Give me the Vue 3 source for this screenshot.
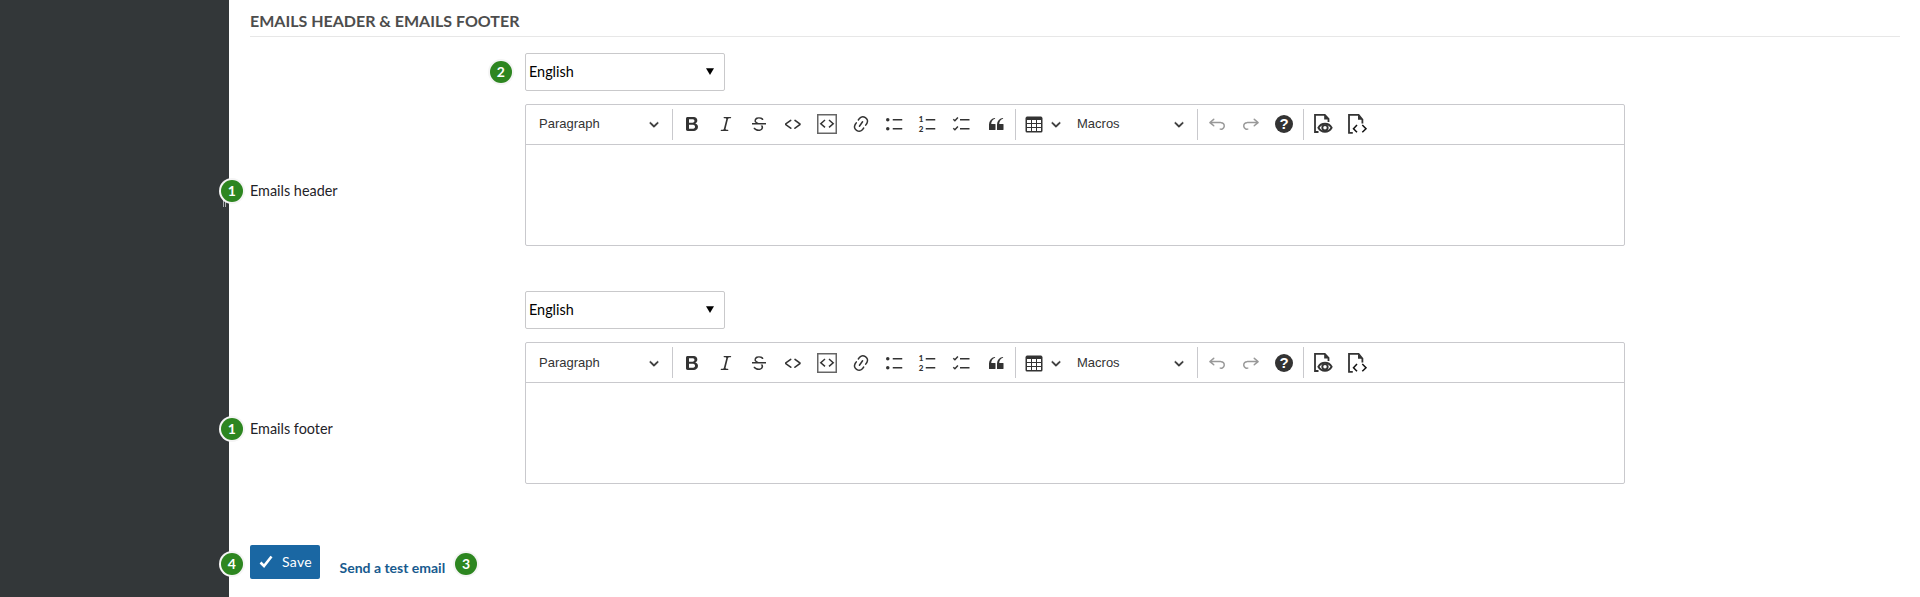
<script setup>
const rows = [
  { key: 'header', label: 'Emails header', language: 'English', badge: true },
  { key: 'footer', label: 'Emails footer', language: 'English', badge: false },
]

const quote =
  'M3 10.423a6.5 6.5 0 0 1 6.056-6.408l.038.67C6.448 5.423 5.354 7.663 5.22 10H9c.552 0 .5.432.5.986v4.511c0 .554-.448.503-1 .503h-5c-.552 0-.5-.449-.5-1.003v-4.574zm8 0a6.5 6.5 0 0 1 6.056-6.408l.038.67c-2.646.739-3.74 2.979-3.873 5.315H17c.552 0 .5.432.5.986v4.511c0 .554-.448.503-1 .503h-5c-.552 0-.5-.449-.5-1.003v-4.574z'
const bold =
  'M10.187 17H5.773c-.637 0-1.092-.138-1.364-.415-.273-.277-.409-.718-.409-1.323V4.738c0-.617.14-1.062.419-1.332.279-.27.73-.406 1.354-.406h4.68c.69 0 1.288.041 1.793.124.506.083.96.242 1.36.478.341.197.644.447.906.75a3.262 3.262 0 0 1 .808 2.162c0 1.401-.722 2.426-2.167 3.075C15.05 10.175 16 11.315 16 13.01a3.756 3.756 0 0 1-2.296 3.504 6.1 6.1 0 0 1-1.517.377c-.571.073-1.238.11-2 .11zm-.217-6.217H7v4.087h3.069c1.977 0 2.965-.69 2.965-2.072 0-.707-.256-1.22-.768-1.537-.512-.319-1.277-.478-2.296-.478zM7 5.13v3.619h2.606c.729 0 1.292-.067 1.69-.2a1.6 1.6 0 0 0 .91-.765c.165-.267.247-.566.247-.897 0-.707-.26-1.176-.778-1.409-.519-.232-1.31-.348-2.375-.348H7z'
const italic =
  'm9.586 14.633.021.004c-.036.335.095.655.393.962.082.083.173.15.274.201h1.474a.6.6 0 1 1 0 1.2H5.304a.6.6 0 0 1 0-1.2h1.15c.474-.07.809-.182 1.005-.334.157-.122.291-.32.404-.597l2.416-9.55a1.053 1.053 0 0 0-.281-.823 1.12 1.12 0 0 0-.442-.296H8.15a.6.6 0 0 1 0-1.2h6.443a.6.6 0 1 1 0 1.2h-1.195c-.376.056-.65.155-.823.296-.215.175-.423.439-.623.79l-2.366 9.347z'
const strike =
  'M7 16.4c-.8-.4-1.5-.9-2.2-1.5a.6.6 0 0 1-.2-.5l.3-.6h1c1 1.2 2.1 1.7 3.7 1.7 1 0 1.8-.3 2.3-.6.6-.4.6-1.2.6-1.3.2-1.2-.9-2.1-.9-2.1h2.1c.3.7.4 1.2.4 1.7v.8l-.6 1.2c-.6.8-1.1 1-1.6 1.2a6 6 0 0 1-2.4.6c-1 0-1.8-.3-2.5-.6zM6.8 9 6 8.3c-.4-.5-.5-.8-.5-1.6 0-.7.1-1.3.5-1.8.4-.6 1-1 1.6-1.3a6.3 6.3 0 0 1 4.7 0 4 4 0 0 1 1.7 1l.3.7c0 .1.2.4-.2.7-.4.2-.9.1-1 0a3 3 0 0 0-1.2-1c-.4-.2-1-.3-2-.4-.7 0-1.4.2-2 .6-.8.6-1 .8-1 1.5 0 .8.5 1 1.2 1.5.6.4 1.1.7 1.9 1H6.8zM3 10.5V9h14v1.5z'
const code =
  'm12.5 5.7 5.2 3.9v1.3l-5.6 4c-.1.2-.3.2-.5.2-.3-.1-.6-.7-.6-1l.3-.4 4.7-3.5L11.5 7l-.2-.2c-.1-.3-.1-.6 0-.8.2-.2.5-.4.8-.4a.8.8 0 0 1 .4.1zm-5.2 0L2 9.6v1.3l5.6 4c.1.2.3.2.5.2.3-.1.7-.7.6-1 0-.1 0-.3-.2-.4l-5-3.5L8.2 7l.2-.2c.1-.3.1-.6 0-.8-.2-.2-.5-.4-.8-.4a.8.8 0 0 0-.3.1z'
const link =
  'm11.077 15 .991-1.416a.75.75 0 1 1 1.229.86l-1.148 1.64a.748.748 0 0 1-.217.206 5.251 5.251 0 0 1-8.503-5.955.741.741 0 0 1 .12-.274l1.147-1.639a.75.75 0 1 1 1.228.86L4.933 10.7l.006.003a3.75 3.75 0 0 0 6.132 4.294l.006.004zm5.494-5.335a.748.748 0 0 1-.12.274l-1.147 1.639a.75.75 0 1 1-1.228-.86l.86-1.23a3.75 3.75 0 0 0-6.144-4.301l-.86 1.229a.75.75 0 0 1-1.229-.86l1.148-1.64a.748.748 0 0 1 .217-.206 5.251 5.251 0 0 1 8.503 5.955zm-4.563-2.532a.75.75 0 0 1 .184 1.045l-3.155 4.505a.75.75 0 1 1-1.229-.86l3.155-4.506a.75.75 0 0 1 1.045-.184z'
const table =
  'M3 6v3h4V6H3zm0 4v3h4v-3H3zm0 4v3h4v-3H3zm5 3h4v-3H8v3zm5 0h4v-3h-4v3zm4-4v-3h-4v3h4zm0-4V6h-4v3h4zm1.5 8a1.5 1.5 0 0 1-1.5 1.5H3A1.5 1.5 0 0 1 1.5 17V4c.222-.863 1.068-1.5 2-1.5h13c.932 0 1.778.637 2 1.5v13zM12 13v-3H8v3h4zm0-4V6H8v3h4z'
const undo =
  'm5.042 9.367 2.189 1.837a.75.75 0 0 1-.965 1.149l-3.788-3.18a.747.747 0 0 1-.21-.284.75.75 0 0 1 .17-.945L6.23 4.762a.75.75 0 1 1 .964 1.15L4.863 7.866h8.917A.75.75 0 0 1 14 7.9a4 4 0 1 1-1.477 7.718l.344-1.489a2.5 2.5 0 1 0 1.094-4.73l.008-.032H5.042z'
const chevron =
  'M.941 4.523a.75.75 0 1 1 1.06-1.06l3.006 3.005 3.005-3.005a.75.75 0 1 1 1.06 1.06l-3.549 3.55a.75.75 0 0 1-1.168-.136L.941 4.523z'
</script>

<template>
  <div class="page">
    <aside class="sidebar"><span class="handle"></span></aside>
    <main class="content">
      <h3 class="title">EMAILS HEADER &amp; EMAILS FOOTER</h3>

      <section v-for="row in rows" :key="row.key" class="field">
        <div class="label">
          <span class="badge edge">1</span>
          {{ row.label }}
        </div>
        <div class="control">
          <span v-if="row.badge" class="badge lang">2</span>
          <div class="select">
            <span>{{ row.language }}</span>
            <svg class="caret" viewBox="0 0 8 7"><path d="M0 .3h8L4 7z" /></svg>
          </div>
          <div class="editor">
            <div class="toolbar">
              <div class="dropdown heading">
                <span>Paragraph</span>
                <svg class="chev" viewBox="0 0 10 10"><path :d="chevron" /></svg>
              </div>
              <i class="sep"></i>
              <div class="group marks">
                <span class="btn"><svg viewBox="0 0 20 20"><path :d="bold" /></svg></span>
                <span class="btn"><svg viewBox="0 0 20 20"><path :d="italic" /></svg></span>
                <span class="btn"><svg viewBox="0 0 20 20"><path :d="strike" /></svg></span>
                <span class="btn"><svg viewBox="0 0 20 20"><path :d="code" /></svg></span>
                <span class="btn">
                  <svg viewBox="0 0 20 20">
                    <rect class="frame" x=".75" y=".75" width="18.5" height="18.5" />
                    <path class="line" d="M8 6 3.8 9.7 8 13.4M12 6l4.2 3.7L12 13.4" />
                  </svg>
                </span>
                <span class="btn"><svg viewBox="0 0 20 20"><path :d="link" /></svg></span>
                <span class="btn">
                  <svg viewBox="0 0 20 20">
                    <circle cx="2.75" cy="5.75" r="1.75" /><circle cx="2.75" cy="14.75" r="1.75" />
                    <path class="line" d="M7.75 5.75h9.5M7.75 14.75h9.5" />
                  </svg>
                </span>
                <span class="btn">
                  <svg viewBox="0 0 20 20">
                    <text x=".8" y="8.2" class="num">1</text>
                    <text x=".8" y="18" class="num">2</text>
                    <path class="line" d="M7.75 5.75h9.5M7.75 14.75h9.5" />
                  </svg>
                </span>
                <span class="btn">
                  <svg viewBox="0 0 20 20">
                    <path class="line" d="M8 5.75h9.5M8 14.75h9.5M1.3 5.2l1.6 1.5 3-3.2M1.3 14.2l1.6 1.5 3-3.2" />
                  </svg>
                </span>
                <span class="btn"><svg viewBox="0 0 20 20"><path :d="quote" /></svg></span>
              </div>
              <i class="sep"></i>
              <div class="tablebtn">
                <svg viewBox="0 0 20 20"><path :d="table" /></svg>
                <svg class="chev" viewBox="0 0 10 10"><path :d="chevron" /></svg>
              </div>
              <div class="dropdown macros">
                <span>Macros</span>
                <svg class="chev" viewBox="0 0 10 10"><path :d="chevron" /></svg>
              </div>
              <i class="sep"></i>
              <div class="group history">
                <span class="btn muted"><svg viewBox="0 0 20 20"><path :d="undo" /></svg></span>
                <span class="btn muted"><svg class="flip" viewBox="0 0 20 20"><path :d="undo" /></svg></span>
                <span class="btn">
                  <svg viewBox="0 0 20 20">
                    <circle cx="10" cy="10" r="9" />
                    <text x="10" y="15.4" class="question">?</text>
                  </svg>
                </span>
              </div>
              <i class="sep"></i>
              <div class="group modes">
                <span class="btn">
                  <svg viewBox="0 0 20 20">
                    <path class="line page-edge" d="M5.500 18H2V.8h9.800l3.700 4V8" />
                    <path d="M11.200.8v4.800h4.600z" />
                    <path class="eye" d="M5.400 13.800c1.500-2.700 3.700-4 6.600-4s5.100 1.300 6.600 4c-1.500 2.700-3.700 4-6.600 4s-5.100-1.300-6.600-4z" />
                    <circle class="eye" cx="12" cy="13.800" r="2.700" />
                  </svg>
                </span>
                <span class="btn">
                  <svg viewBox="0 0 20 20">
                    <path class="line page-edge" d="M5.800 18.900H2V.8h9.600l3.800 4.700v4" />
                    <path d="M11 .8v5h4.600z" />
                    <path class="line black" d="m10 11-3.500 3.700 3.500 3.600M15.300 11l3.700 3.700-3.700 3.600" />
                  </svg>
                </span>
              </div>
            </div>
            <div class="body"></div>
          </div>
        </div>
      </section>

      <div class="actions">
        <span class="badge edge save-badge">4</span>
        <button class="save">
          <svg viewBox="0 0 14 13"><path d="M1.500 7.500 5 11 12.500 1.500" /></svg>
          <span>Save</span>
        </button>
        <a class="test">Send a test email</a>
        <span class="badge inline">3</span>
      </div>
    </main>
  </div>
</template>

<style>
body { background: #fff; overflow: hidden; }
</style>

<style scoped>
* { box-sizing: border-box; }
.page { display: flex; height: 597px; font-family: Lato, "Liberation Sans", sans-serif; font-size: 14.4px; color: #1f2328; }
.sidebar { width: 229px; flex: none; background: #333739; position: relative; }
.handle { position: absolute; left: 223px; top: 197px; width: 3px; height: 10px; border: solid #aaaeb0; border-width: 0 1px; }
.content { flex: 1; padding: 0 20px 0 21px; }
.title { margin: 0; height: 37px; padding-top: 11px; border-bottom: 1px solid #e7e7e7; font-size: 16px; line-height: 20px; font-weight: 700; color: #4d4d4d; }
.field { display: flex; margin-top: 16px; height: 193px; }
.field + .field { margin-top: 45px; }
.label { width: 275px; flex: none; position: relative; padding-top: 128px; line-height: 20px; }
.control { width: 1100px; position: relative; }
.select { width: 200px; height: 38px; border: 1px solid #c9c9cb; border-radius: 2px; display: flex; align-items: center; justify-content: space-between; padding: 0 10px 2px 3px; color: #000; }
.editor { margin-top: 13px; height: 142px; border: 1px solid #c9c9cd; border-radius: 2px; }
.toolbar { height: 40px; border-bottom: 1px solid #c9c9cd; display: flex; align-items: center; font: 13px/20px "Liberation Sans", Arial, sans-serif; color: #333; padding-bottom: 1px; }
.field + .field .toolbar { padding-bottom: 0; }
.dropdown { display: flex; align-items: center; justify-content: space-between; }
.heading { width: 146px; padding: 0 13px; }
.macros { width: 134px; padding: 0 13px 0 14px; }
.sep { width: 1px; height: 31px; background: #c9c9cd; flex: none; }
svg { display: block; width: 20px; height: 20px; fill: #333; overflow: visible; flex: none; }
svg.chev { width: 10px; height: 10px; stroke: #333; stroke-width: .4; }
svg.caret { width: 8px; height: 7px; fill: #000; }
.group { display: flex; }
.btn { display: flex; justify-content: center; }
.marks { width: 342px; padding: 0 2px; }
.marks .btn { width: 33.8px; }
.tablebtn { display: flex; align-items: center; gap: 7px; width: 47px; padding-left: 8px; }
.history { width: 105px; padding-left: 2px; }
.history .btn { width: 33.8px; }
.modes { padding-left: 2px; }
.modes .btn { width: 34px; }
.muted svg { fill: #999; }
.flip { transform: scaleX(-1); }
.line { fill: none; stroke: #333; stroke-width: 1.5; }
.page-edge { stroke-width: 1.8; }
.eye { fill: #fff; stroke: #333; stroke-width: 1.9; }
.black { stroke: #111; }
.frame { fill: none; stroke: #666; stroke-width: 1.5; }
.num { font: 900 8px Lato, sans-serif; }
.question { font: 700 15px "Liberation Sans", sans-serif; fill: #fff; text-anchor: middle; }
.badge { width: 22px; height: 22px; border-radius: 50%; background: #2d8620; box-shadow: 0 0 0 2px #f5f5f5; color: #fff; font: 700 14px/22px Lato, sans-serif; text-align: center; display: block; }
.edge { position: absolute; left: -29.3px; top: 127px; }
.lang { position: absolute; left: -35.3px; top: 8px; }
.actions { display: flex; align-items: flex-start; margin-top: 61px; position: relative; }
.save-badge { top: 8px; }
.save { width: 70px; height: 34px; border: 0; border-radius: 2px; background: #1a67a3; color: #fff; padding: 0 0 1px 9px; display: flex; align-items: center; gap: 9px; font: 14px/18px Lato, sans-serif; letter-spacing: .3px; }
.save svg { width: 14px; height: 13px; fill: none; stroke: #fff; stroke-width: 2.6; }
.test { margin: 13px 0 0 19.5px; width: 106.5px; font-size: 14px; line-height: 20px; font-weight: 700; color: #175a8e; white-space: nowrap; }
.inline { margin: 8px 0 0 9px; }
</style>
